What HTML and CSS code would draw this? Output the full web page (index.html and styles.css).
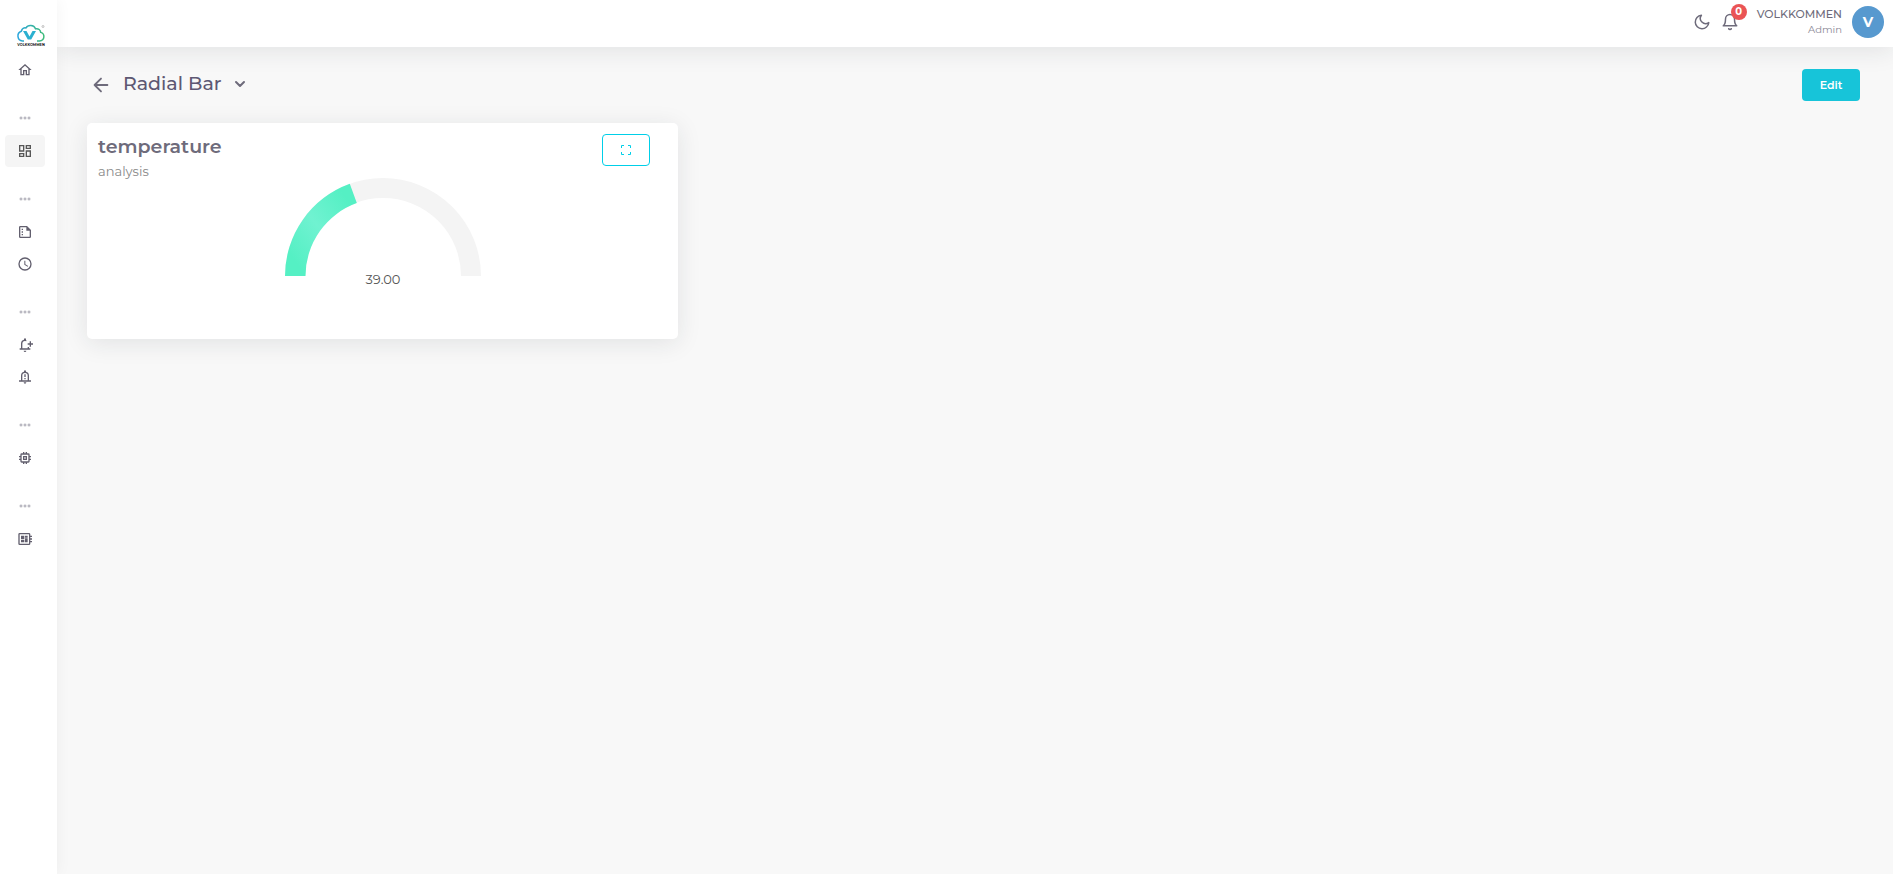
FILE: index.html
```html
<!DOCTYPE html>
<html lang="en">
<head>
  <meta charset="UTF-8">
  <meta name="viewport" content="width=device-width, initial-scale=1.0">
  <title>Radial Bar</title>
  <link rel="stylesheet" href="styles.css">
</head>
<body>
  <aside class="sidebar">
    <a href="#" class="logo" aria-label="Volkkommen">
      <svg width="30" height="24" viewBox="0 0 60 48">
        <defs>
          <linearGradient id="logo-gradient" x1="0" x2="1" y1="0" y2="0">
            <stop offset="0" stop-color="#2ba6de"/>
            <stop offset="1" stop-color="#3dbb78"/>
          </linearGradient>
        </defs>
        <path d="M16 34H13a10 10 0 0 1-2.400-19.400C12 9 16 7 20 8c4-7.200 16-6.400 19 1.600 6-1.200 10 2.400 10.400 7.200 9 2.400 8.600 16.400-2.400 17.200H42" fill="none" stroke="url(#logo-gradient)" stroke-width="3"/>
        <path d="M14 14h7l6 11 6-11h7l-9.600 17.200h-6.800z" fill="#2bb0d0"/>
        <circle cx="54" cy="5" r="2" fill="none" stroke="#999" stroke-width="1.200"/>
        <text class="logo-text" x="30" y="43" text-anchor="middle">VOLKKOMMEN</text>
      </svg>
    </a>

    <nav class="menu">
      <a href="#" class="menu-item" aria-label="Home">
        <svg viewBox="0 0 24 24"><path d="M12 5.690l5 4.500V18h-2v-6H9v6H7v-7.810l5-4.500M12 3L2 12h3v8h6v-6h2v6h6v-8h3L12 3z"/></svg>
      </a>

      <div class="menu-dots"><span></span><span></span><span></span></div>
      <a href="#" class="menu-item active" aria-label="Dashboards">
        <svg viewBox="0 0 24 24"><path d="M19 5v2h-4V5h4M9 5v6H5V5h4m10 8v6h-4v-6h4M9 17v2H5v-2h4M21 3h-8v6h8V3zM11 3H3v10h8V3zm10 8h-8v10h8V11zm-10 4H3v6h8v-6z"/></svg>
      </a>

      <div class="menu-dots"><span></span><span></span><span></span></div>
      <a href="#" class="menu-item" aria-label="Reports">
        <svg viewBox="0 0 24 24"><path d="M15 3H5a2 2 0 0 0-2 2v14a2 2 0 0 0 2 2h14a2 2 0 0 0 2-2V9l-6-6zM5 19V5h9v5h5v9H5zM7 7h2v2H7V7zm0 4h2v2H7v-2zm0 4h2v2H7v-2z"/></svg>
      </a>
      <a href="#" class="menu-item" aria-label="History">
        <svg viewBox="0 0 24 24"><path d="M12 2a10 10 0 1 0 0 20 10 10 0 0 0 0-20zm0 18a8 8 0 1 1 0-16 8 8 0 0 1 0 16zm.5-13H11v6l5 3.200.8-1.300-4.300-2.600V7z"/></svg>
      </a>

      <div class="menu-dots"><span></span><span></span><span></span></div>
      <a href="#" class="menu-item" aria-label="Add alarm">
        <svg viewBox="0 0 24 24"><path d="M10 20.500h4a2 2 0 0 1-4 0zM18 17v-2h-2v2H8v-7a4 4 0 0 1 6-3.460V4.550a6 6 0 0 0-.5-.2V3.500a1.500 1.500 0 0 0-3 0v.7A6 6 0 0 0 6 10v7H4v2h16v-2h-2zM24 9.500h-3v-3h-2v3h-3v2h3v3h2v-3h3v-2z"/></svg>
      </a>
      <a href="#" class="menu-item" aria-label="Alarms">
        <svg viewBox="0 0 24 24"><path fill-rule="evenodd" d="M10 20h4a2 2 0 0 1-4 0zm8-3v-7a6 6 0 0 0-4.500-5.800v-.7a1.500 1.500 0 0 0-3 0v.7A6 6 0 0 0 6 10v7H3v2h18v-2h-3zM8 17v-7a4 4 0 0 1 8 0v7H8zm3-9h2v4h-2V8zm0 5.500h2v2h-2v-2z"/></svg>
      </a>

      <div class="menu-dots"><span></span><span></span><span></span></div>
      <a href="#" class="menu-item" aria-label="Devices">
        <svg viewBox="0 0 24 24"><path d="M15 9H9v6h6V9zm-2 4h-2v-2h2v2zm8-2V9h-2V7a2 2 0 0 0-2-2h-2V3h-2v2h-2V3H9v2H7a2 2 0 0 0-2 2v2H3v2h2v2H3v2h2v2a2 2 0 0 0 2 2h2v2h2v-2h2v2h2v-2h2a2 2 0 0 0 2-2v-2h2v-2h-2v-2h2zm-4 6H7V7h10v10z"/></svg>
      </a>

      <div class="menu-dots"><span></span><span></span><span></span></div>
      <a href="#" class="menu-item" aria-label="Boards">
        <svg viewBox="0 0 24 24"><path d="M22.500 9V7H20V5a2 2 0 0 0-2-2H4a2 2 0 0 0-2 2v14a2 2 0 0 0 2 2h14a2 2 0 0 0 2-2v-2h2.500v-2H20v-2h2.500v-2H20V9h2.500zM18 19H4V5h14v14zM6 13h5v4H6v-4zm6-6h4v3h-4V7zM6 7h5v5H6V7zm6 4h4v6h-4v-6z"/></svg>
      </a>
    </nav>
  </aside>

  <div class="page">
    <header class="navbar">
      <button class="icon-button" aria-label="Dark mode">
        <svg viewBox="0 0 24 24"><path d="M21 12.790A9 9 0 1 1 11.210 3 7 7 0 0 0 21 12.790z"/></svg>
      </button>
      <button class="icon-button" aria-label="Notifications">
        <svg viewBox="0 0 24 24"><path d="M18 8A6 6 0 0 0 6 8c0 7-3 9-3 9h18s-3-2-3-9M13.730 21a2 2 0 0 1-3.460 0"/></svg>
        <span class="badge">0</span>
      </button>
      <div class="user">
        <span class="user-name">VOLKKOMMEN</span>
        <span class="user-role">Admin</span>
      </div>
      <div class="avatar">V</div>
    </header>

    <main class="content">
      <div class="title-bar">
        <button class="back-button" aria-label="Back">
          <svg viewBox="0 0 24 24"><path d="M19 12H5M12 19l-7-7 7-7"/></svg>
        </button>
        <button class="dashboard-select" aria-haspopup="true">
          Radial Bar
          <svg viewBox="0 0 24 24"><path d="M6 9l6 6 6-6"/></svg>
        </button>
        <button class="edit-button">Edit</button>
      </div>

      <div class="widgets">
        <section class="card">
          <div class="card-header">
            <div>
              <h2 class="card-title">temperature</h2>
              <p class="card-subtitle">analysis</p>
            </div>
            <button class="expand-button" aria-label="Full screen">
              <svg viewBox="0 0 10 10"><path d="M.5 3V.5H3M7 .5h2.500V3M9.500 7v2.500H7M3 9.500H.5V7"/></svg>
            </button>
          </div>
          <!-- half circle gauge, 39% filled -->
          <svg class="gauge" width="196" height="112" viewBox="0 0 196 112">
            <defs>
              <linearGradient id="gauge-gradient" x1="0" y1="1" x2="1" y2="0">
                <stop offset="0.150" stop-color="#55f0c4"/>
                <stop offset="0.500" stop-color="#70f2d1"/>
                <stop offset="0.850" stop-color="#55f0c4"/>
              </linearGradient>
            </defs>
            <path d="M10 98a88 88 0 0 1 176 0" fill="none" stroke="#f4f4f4" stroke-width="20"/>
            <path d="M0 98A98 98 0 0 1 64.800 5.800L71.800 25.100A77.500 77.500 0 0 0 20.500 98z" fill="url(#gauge-gradient)"/>
            <text class="gauge-value" x="98" y="106" text-anchor="middle">39.00</text>
          </svg>
        </section>
      </div>
    </main>
  </div>
</body>
</html>
```
FILE: styles.css
```css
* {
  box-sizing: border-box;
}

body {
  margin: 0;
  min-height: 100vh;
  display: flex;
  background-color: #f8f8f8;
  color: #6e6b7b;
  font-family: Montserrat, Inter, Helvetica, Arial, sans-serif;
  font-size: 14px;
}

button {
  font-family: inherit;
  color: inherit;
  background: none;
  border: none;
  padding: 0;
  cursor: pointer;
}

svg {
  display: block;
}

/* Sidebar */
.sidebar {
  width: 57px;
  flex-shrink: 0;
  padding: 24px 12px 0 5px;
  background-color: #fff;
  box-shadow: 0 0 15px rgba(34, 41, 47, 0.05);
  z-index: 2;
}

.logo {
  display: block;
  margin-left: 11px;
  height: 30px;
}

.logo-text {
  fill: #222;
  font-size: 7px;
  font-weight: 700;
}

.menu-item {
  display: flex;
  align-items: center;
  justify-content: center;
  height: 32px;
  border-radius: 4px;
}

.menu-item svg {
  width: 16px;
  height: 16px;
  fill: #625f6e;
}

.menu-item.active {
  background-color: #f5f5f5;
}

.menu-item.active svg {
  fill: #565656;
}

.menu-dots {
  display: flex;
  align-items: center;
  justify-content: center;
  gap: 2px;
  height: 49px;
  padding-top: 14px;
}

.menu-dots span {
  width: 2px;
  height: 2px;
  border-radius: 1px;
  background-color: #a6a4b0;
  outline: 1px solid rgba(166, 164, 176, 0.3);
}

/* Navbar */
.page {
  flex: 1;
  min-width: 0;
}

.navbar {
  display: flex;
  align-items: center;
  justify-content: flex-end;
  height: 47px;
  padding: 0 9px 3px 0;
  background-color: #fff;
  box-shadow: 0 4px 24px rgba(34, 41, 47, 0.1);
}

.icon-button {
  position: relative;
  margin-right: 10px;
}

.icon-button svg,
.back-button svg,
.dashboard-select svg {
  width: 18px;
  height: 18px;
  fill: none;
  stroke: #6e6b7b;
  stroke-width: 2;
  stroke-linecap: round;
  stroke-linejoin: round;
}

.badge {
  position: absolute;
  top: -9px;
  right: -8px;
  width: 16px;
  height: 16px;
  border-radius: 8px;
  background-color: #ea5455;
  color: #fff;
  font-size: 10px;
  font-weight: 700;
  line-height: 16px;
}

.user {
  display: flex;
  flex-direction: column;
  align-items: flex-end;
  margin: 0 10px 0 8px;
  line-height: 16px;
}

.user-name {
  font-size: 11px;
  font-weight: 500;
}

.user-role {
  font-size: 10px;
  color: #8d8a98;
}

.avatar {
  width: 32px;
  height: 32px;
  border-radius: 50%;
  background-color: #5799cf;
  color: #fff;
  font-size: 14px;
  font-weight: 700;
  line-height: 32px;
  text-align: center;
}

/* Content */
.content {
  padding: 22px 33px 22px 30px;
}

.title-bar {
  display: flex;
  align-items: center;
  padding-left: 3px;
  margin-bottom: 22px;
}

.back-button svg {
  width: 22px;
  height: 22px;
}

.dashboard-select {
  display: flex;
  align-items: center;
  gap: 10px;
  padding-bottom: 2px;
  margin-left: 11px;
  color: #5e5873;
  font-size: 19px;
  font-weight: 500;
  line-height: 24px;
}

.dashboard-select svg {
  width: 16px;
  height: 16px;
  stroke-width: 3;
}

.edit-button {
  width: 58px;
  height: 32px;
  margin-left: auto;
  border-radius: 4px;
  background-color: #17c4d9;
  color: #fff;
  font-size: 11px;
  font-weight: 600;
}

.widgets {
  display: grid;
  grid-template-columns: repeat(3, 1fr);
}

.card {
  min-height: 216px;
  padding: 11px;
  border-radius: 5px;
  background-color: #fff;
  box-shadow: 0 4px 24px rgba(34, 41, 47, 0.1);
}

.card-header {
  display: flex;
  align-items: flex-start;
  justify-content: space-between;
  height: 44px;
  padding-right: 17px;
}

.card-title {
  margin: 0;
  font-size: 19px;
  font-weight: 600;
  line-height: 26px;
}

.card-subtitle {
  margin: 0;
  color: #8a8a8a;
  font-size: 13px;
  line-height: 22px;
}

.expand-button {
  display: flex;
  align-items: center;
  justify-content: center;
  width: 48px;
  height: 32px;
  border: 1px solid #00cfe8;
  border-radius: 4px;
}

.expand-button svg {
  width: 10px;
  height: 10px;
  fill: none;
  stroke: #00cfe8;
}

.gauge {
  margin: 0 auto;
}

.gauge-value {
  fill: #555;
  font-size: 13px;
}
```
